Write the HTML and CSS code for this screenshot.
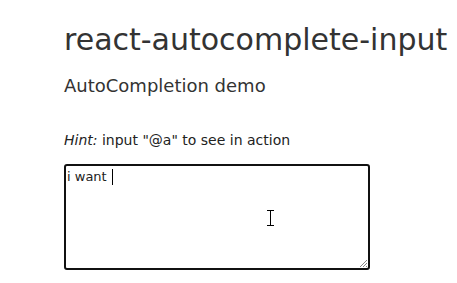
FILE: index.html
```html
<!DOCTYPE html>
<html>
<head>
<meta charset="utf-8">
<link rel="stylesheet" href="styles.css">
</head>
<body>
<div class="page">
  <h1 class="title">react-autocomplete-input</h1>
  <h2 class="subtitle">AutoCompletion demo</h2>
  <p class="hint"><em>Hint:</em> input "@a" to see in action</p>
  <div class="field">
    <div class="textarea"><span class="typed">i want </span><span class="caret"></span></div>
    <svg class="grip" width="10" height="10" viewBox="0 0 10 10"><path d="M9 2 L2 9 M9 5 L5 9 M9 8 L8 9" stroke="#888" stroke-width="1"/></svg>
    <svg class="ibeam" width="9" height="16" viewBox="0 0 9 16"><path d="M1 0.5 H8 M1 15.5 H8 M4.5 0.5 V15.5" stroke="#000" stroke-width="1" fill="none"/></svg>
  </div>
</div>
</body>
</html>
```
FILE: styles.css
```css
html, body { margin: 0; padding: 0; background: #fff; }
body { font-family: "DejaVu Sans", Verdana, sans-serif; color: #333; }
.page { padding: 22px 0 0 64px; display: flex; flex-direction: column; align-items: flex-start; }
.title { font-size: 30px; font-weight: normal; margin: 0; line-height: 36px; color: #333; }
.subtitle { font-size: 18px; font-weight: normal; margin: 17px 0 0 0; line-height: 22px; color: #333; }
.hint { font-size: 14px; margin: 34px 0 0 0; line-height: 18px; color: #222; }
.hint em { font-style: italic; }
.field { position: relative; margin-top: 15px; }
.textarea { box-sizing: border-box; width: 306px; height: 106px; border: 2px solid #111; border-radius: 3px; padding: 3px 1px; font-size: 13px; line-height: 16px; color: #222; display: flex; align-items: flex-start; white-space: pre; }
.caret { display: inline-block; width: 1px; height: 16px; margin-left: 1px; background: #000; }
.grip { position: absolute; right: 2px; bottom: 2px; }
.ibeam { position: absolute; left: 202px; top: 46px; }
```
